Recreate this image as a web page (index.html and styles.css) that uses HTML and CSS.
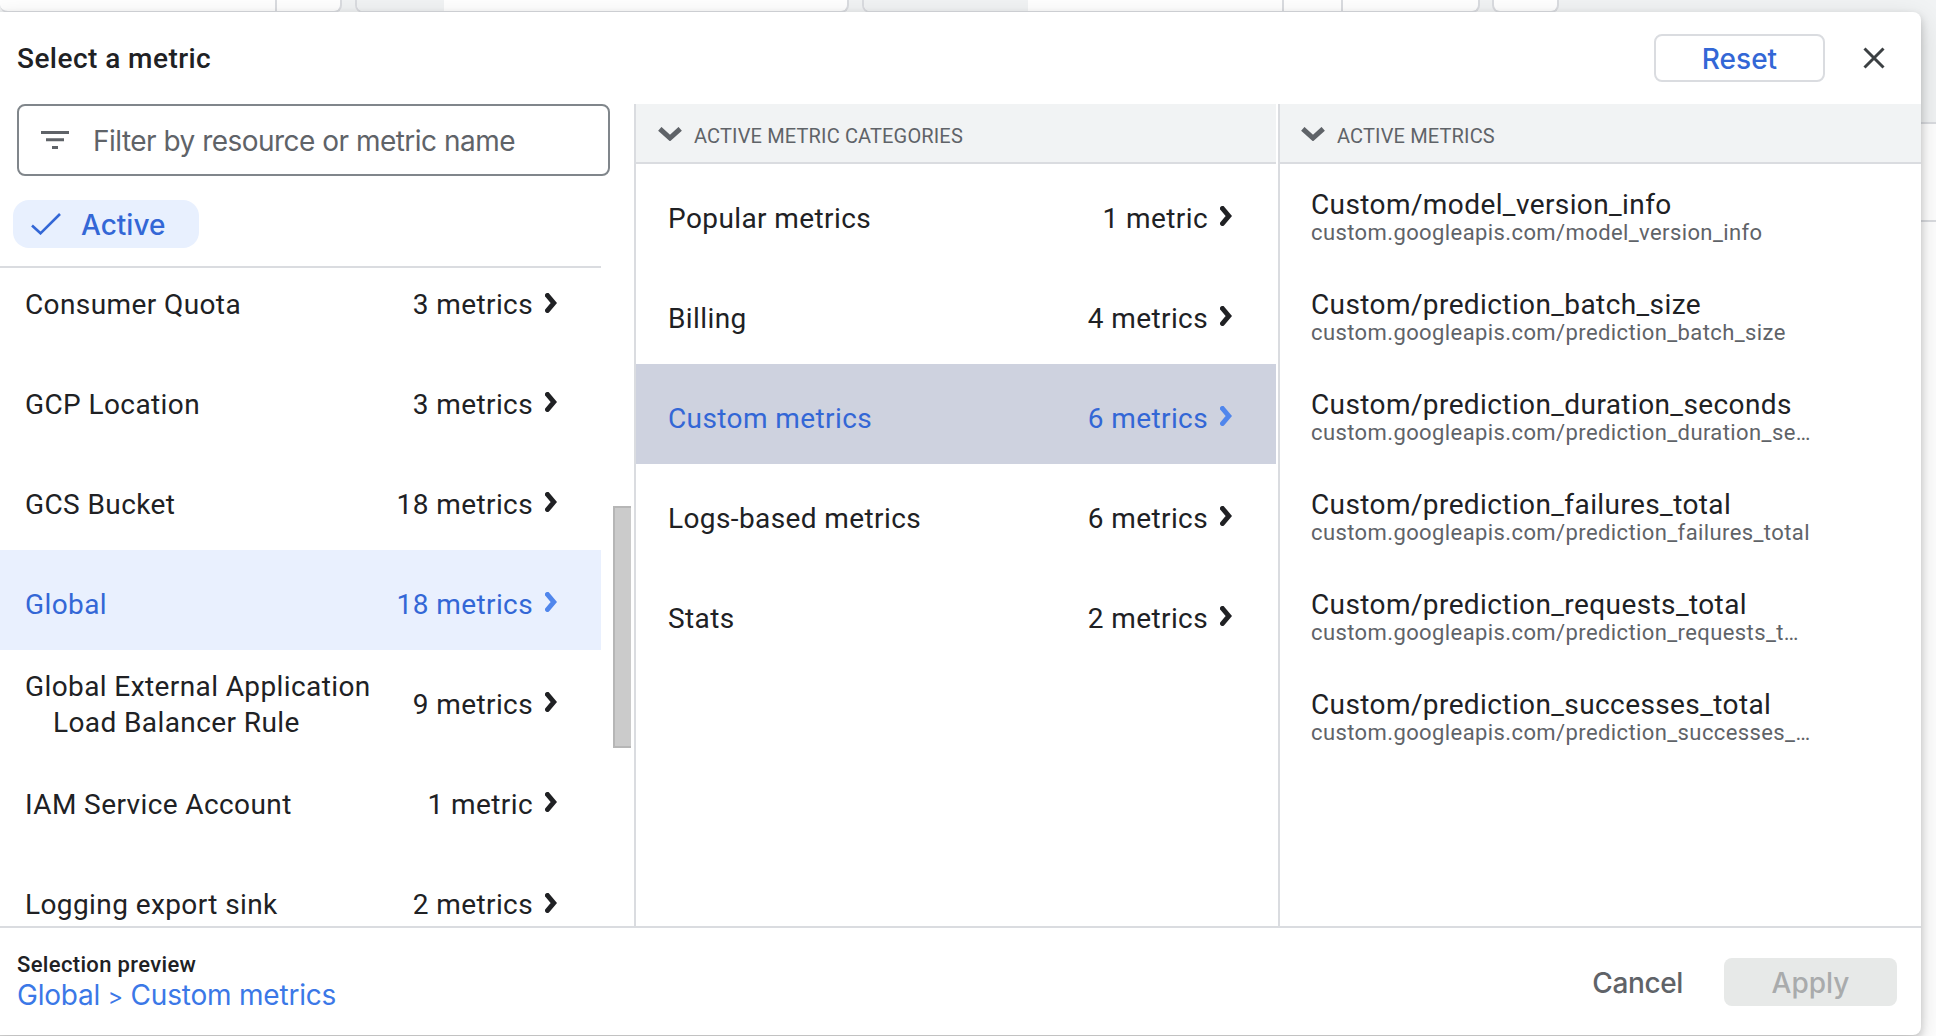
FILE: index.html
```html
<!DOCTYPE html>
<html lang="en">
<head>
<meta charset="utf-8">
<title>Select a metric</title>
<link rel="stylesheet" href="styles.css">
</head>
<body>
<svg class="defs" width="0" height="0" aria-hidden="true">
  <symbol id="right" viewBox="0 0 12 20"><path d="M2.500 2.500 8.800 10l-6.300 7.500" fill="none" stroke="currentColor" stroke-width="5" stroke-linecap="round" stroke-linejoin="miter"/></symbol>
  <symbol id="down" viewBox="0 0 24 14"><path d="M1.800 1.800 12 11 22.200 1.800" fill="none" stroke="currentColor" stroke-width="5"/></symbol>
</svg>

<div class="toolbar">
  <div class="tool tool-first"><span class="divider"></span></div>
  <div class="tool tool-a"><span class="tag"></span></div>
  <div class="tool tool-b"><span class="tag"></span><span class="divider"></span><span class="divider"></span></div>
  <div class="tool tool-last"></div>
</div>
<div class="card-behind"></div>

<section class="dialog">
  <header class="top">
    <h1>Select a metric</h1>
    <button class="btn reset">Reset</button>
    <svg class="close" viewBox="0 0 22 22"><path d="M1.500 1.500l19 19M20.500 1.500l-19 19" stroke="#3c4043" stroke-width="3"/></svg>
  </header>

  <main class="columns">
    <div class="resources">
      <div class="filter">
        <svg class="filter-icon" viewBox="0 0 28 18"><path d="M0 0h28v3H0zM5 7.300h18v3H5zM11 15h6v3h-6z" fill="#5f6368"/></svg>
        <span>Filter by resource or metric name</span>
      </div>
      <div class="chip">
        <svg class="check" viewBox="0 0 30 22"><path d="M1 12.500l8.500 7.800L29 1" fill="none" stroke="currentColor" stroke-width="2.600"/></svg>
        <span>Active</span>
      </div>
      <div class="scroller">
        <div class="list">
          <div class="row"><span class="name">Consumer Quota</span><span class="count">3 metrics</span><svg class="chev"><use href="#right"/></svg></div>
          <div class="row"><span class="name">GCP Location</span><span class="count">3 metrics</span><svg class="chev"><use href="#right"/></svg></div>
          <div class="row"><span class="name">GCS Bucket</span><span class="count">18 metrics</span><svg class="chev"><use href="#right"/></svg></div>
          <div class="row selected"><span class="name">Global</span><span class="count">18 metrics</span><svg class="chev"><use href="#right"/></svg></div>
          <div class="row"><span class="name">Global External Application<br>Load Balancer Rule</span><span class="count">9 metrics</span><svg class="chev"><use href="#right"/></svg></div>
          <div class="row"><span class="name">IAM Service Account</span><span class="count">1 metric</span><svg class="chev"><use href="#right"/></svg></div>
          <div class="row"><span class="name">Logging export sink</span><span class="count">2 metrics</span><svg class="chev"><use href="#right"/></svg></div>
        </div>
        <div class="track"><div class="thumb"></div></div>
      </div>
    </div>

    <div class="categories">
      <h2><svg class="down"><use href="#down"/></svg>ACTIVE METRIC CATEGORIES</h2>
      <div class="row"><span class="name">Popular metrics</span><span class="count">1 metric</span><svg class="chev"><use href="#right"/></svg></div>
      <div class="row"><span class="name">Billing</span><span class="count">4 metrics</span><svg class="chev"><use href="#right"/></svg></div>
      <div class="row selected hover"><span class="name">Custom metrics</span><span class="count">6 metrics</span><svg class="chev"><use href="#right"/></svg></div>
      <div class="row"><span class="name">Logs-based metrics</span><span class="count">6 metrics</span><svg class="chev"><use href="#right"/></svg></div>
      <div class="row"><span class="name">Stats</span><span class="count">2 metrics</span><svg class="chev"><use href="#right"/></svg></div>
    </div>

    <div class="metrics">
      <h2><svg class="down"><use href="#down"/></svg>ACTIVE METRICS</h2>
      <div class="metric"><b>Custom/model_version_info</b><small>custom.googleapis.com/model_version_info</small></div>
      <div class="metric"><b>Custom/prediction_batch_size</b><small>custom.googleapis.com/prediction_batch_size</small></div>
      <div class="metric"><b>Custom/prediction_duration_seconds</b><small>custom.googleapis.com/prediction_duration_se…</small></div>
      <div class="metric"><b>Custom/prediction_failures_total</b><small>custom.googleapis.com/prediction_failures_total</small></div>
      <div class="metric"><b>Custom/prediction_requests_total</b><small>custom.googleapis.com/prediction_requests_t…</small></div>
      <div class="metric"><b>Custom/prediction_successes_total</b><small>custom.googleapis.com/prediction_successes_…</small></div>
    </div>
  </main>

  <footer class="bottom">
    <div class="preview">
      <div class="preview-label">Selection preview</div>
      <div class="preview-path">Global <span class="sep">&gt;</span> Custom metrics</div>
    </div>
    <button class="btn cancel">Cancel</button>
    <button class="btn apply">Apply</button>
  </footer>
</section>
</body>
</html>
```
FILE: styles.css
```css
* { box-sizing: border-box; }

body {
  position: relative;
  width: 1936px;
  height: 1036px;
  margin: 0;
  overflow: hidden;
  background: #f1f3f4;
  color: #202124;
  font: 400 28px/36px Roboto, sans-serif;
  letter-spacing: 0.4px;
}

.defs { position: absolute; }

/* Page behind the dialog */
.toolbar { display: flex; gap: 13px; height: 13px; }
.tool {
  display: flex;
  justify-content: flex-end;
  border: 2px solid #dadce0;
  border-top: 0;
  border-radius: 0 0 8px 8px;
  background: #fff;
}
.tool-first { width: 342px; border-left: 0; }
.tool-first .divider { margin-right: 63px; }
.tool-a { width: 494px; }
.tool-b { width: 618px; }
.tool-b .divider + .divider { margin: 0 135px 0 57px; }
.tool-last { width: 67px; margin-left: -1px; }
.divider { width: 2px; background: #dadce0; }
.tag { margin-right: auto; background: #f1f3f4; border-radius: 0 0 0 6px; }
.tool-a .tag { width: 87px; }
.tool-b .tag { width: 164px; }
.card-behind {
  height: 914px;
  margin-top: 109px;
  border-top: 2px solid #dadce0;
  background: linear-gradient(#dadce0, #dadce0) 0 96px / 100% 2px no-repeat #fff;
}

/* Dialog */
.dialog {
  position: absolute;
  top: 12px;
  left: -8px;
  display: flex;
  flex-direction: column;
  width: 1929px;
  height: 1023px;
  padding-left: 8px;
  border-radius: 8px;
  background: #fff;
  box-shadow: 0 4px 8px rgba(0, 0, 0, 0.2), 0 8px 28px rgba(0, 0, 0, 0.14);
}

.top {
  display: flex;
  align-items: center;
  height: 92px;
  padding: 0 36px 0 17px;
}
.top h1 { flex: 1; margin: 0; padding-top: 2px; font-size: 28px; font-weight: 500; letter-spacing: 0.45px; }

.btn {
  height: 48px;
  padding: 1px 0 0;
  border: 0;
  border-radius: 8px;
  background: none;
  font: 500 28px/44px Inter, sans-serif;
}
.reset { width: 171px; border: 2px solid #dadce0; color: #3367d6; }
.close { width: 22px; height: 22px; margin-left: 38px; }

.columns { display: flex; height: 822px; }

.resources { display: flex; flex-direction: column; width: 634px; }
.filter {
  display: flex;
  align-items: center;
  gap: 24px;
  width: 593px;
  height: 72px;
  margin-left: 17px;
  padding-left: 22px;
  border: 2px solid #80868b;
  border-radius: 8px;
  color: #5f6368;
  font-family: Inter, sans-serif;
  letter-spacing: -0.52px;
}
.filter span, .chip span { padding-top: 1px; }
.filter-icon { width: 28px; height: 18px; }
.chip {
  display: flex;
  align-items: center;
  gap: 20px;
  width: 186px;
  height: 48px;
  margin: 24px 0 18px 13px;
  padding-left: 18px;
  border-radius: 16px;
  background: #e8f0fe;
  color: #3367d6;
  font-family: Inter, sans-serif;
  font-weight: 500;
  letter-spacing: 0;
}
.check { width: 30px; height: 22px; }

.scroller { display: flex; flex: 1; gap: 12px; min-height: 0; }
.list {
  display: flex;
  flex-direction: column;
  justify-content: flex-end;
  width: 601px;
  border-top: 2px solid #dadce0;
  overflow: hidden;
}
.list .row:first-child { height: 82px; padding-top: 0; padding-bottom: 8px; }
.list .row:last-child { height: 76px; padding-top: 34px; }

.row {
  display: flex;
  flex: none;
  align-items: center;
  height: 100px;
  padding: 9px 44px 0 25px;
}
.categories .row { padding-left: 32px; }
.name { flex: 1; padding-left: 28px; text-indent: -28px; }
.count { margin-right: 12px; white-space: nowrap; }
.chev { width: 12px; height: 20px; margin-top: -5px; }
.selected { background: #e9f0fe; color: #3367d6; }
.hover { background: #ced2df; }
.selected .chev { color: #5086ec; }

.track { width: 18px; padding-top: 240px; }
.thumb {
  height: 242px;
  border: 2px solid #b6b6b6;
  border-right: 0;
  background: #cbcbcb;
}

.categories { width: 644px; padding-right: 2px; border-left: 2px solid #dadce0; }
.metrics { flex: 1; border-left: 2px solid #dadce0; }
.categories h2, .metrics h2 {
  display: flex;
  align-items: center;
  gap: 12px;
  height: 60px;
  margin: 0;
  padding: 6px 0 0 22px;
  border-bottom: 2px solid #dadce0;
  background: #f1f3f4;
  color: #5f6368;
  font-size: 20px;
  font-weight: 400;
  letter-spacing: 0.15px;
}
.metrics h2 { padding-left: 21px; }
.down { width: 24px; height: 14px; margin-top: -5px; }

.metric { height: 100px; padding: 27px 0 0 31px; white-space: nowrap; }
.metric b { display: block; font-weight: 400; line-height: 28px; }
.metric small { display: block; padding-top: 1px; color: #5f6368; font-size: 22px; line-height: 26px; }

.bottom {
  display: flex;
  flex: 1;
  align-items: flex-start;
  padding: 30px 24px 0 17px;
  border-top: 2px solid #dadce0;
}
.preview { flex: 1; margin-top: -7px; }
.preview-label { font-size: 22px; font-weight: 500; line-height: 28px; letter-spacing: 0.35px; }
.preview-path { color: #3b78e7; font-family: Inter, sans-serif; line-height: 32px; letter-spacing: -0.2px; }
.sep { font-size: 23px; }
.cancel { margin-right: 41px; color: #5f6368; letter-spacing: -0.38px; }
.apply { width: 173px; background: #e7e9e8; color: #a9abac; }
```
